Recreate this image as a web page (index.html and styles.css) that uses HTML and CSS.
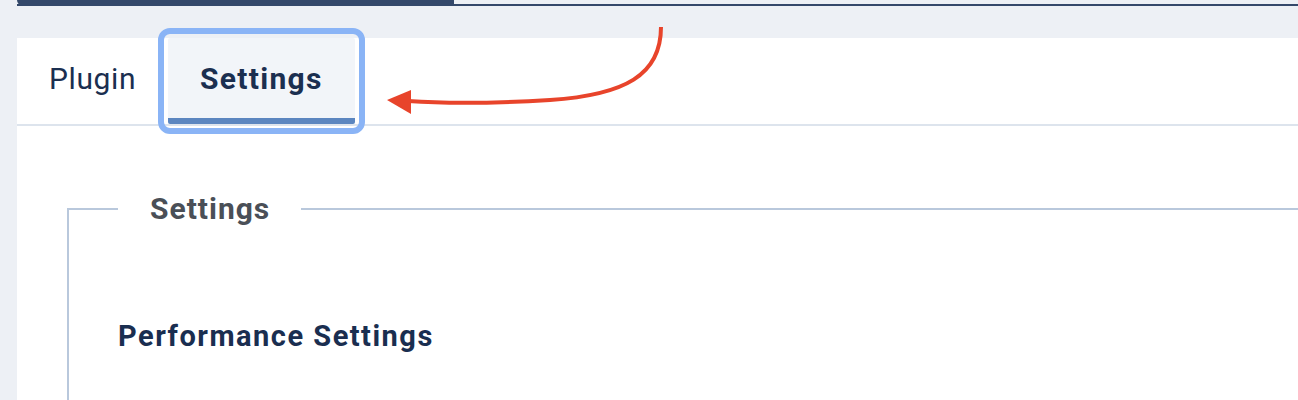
FILE: index.html
```html
<!DOCTYPE html>
<html lang="en">
<head>
  <meta charset="UTF-8" />
  <meta name="viewport" content="width=device-width, initial-scale=1.0" />
  <title>Plugin – Settings</title>
  <link rel="stylesheet" href="styles.css">
</head>
<body>
  <div class="progress">
    <div class="progress-fill"></div>
  </div>

  <div class="panel">
    <div class="tabs">
      <button class="tab">Plugin</button>
      <button class="tab active">Settings</button>
    </div>

    <div class="panel-body">
      <fieldset class="group">
        <legend>Settings</legend>
        <h3 class="group-title">Performance Settings</h3>
      </fieldset>
    </div>
  </div>

  <!-- Annotation arrow pointing at the Settings tab -->
  <svg class="callout" width="1298" height="400" viewBox="0 0 1298 400">
    <path d="M661 27 C 661 75 625 95 550 100 C 500 103 450 104 408 101" fill="none" stroke="#e8442b" stroke-width="4" stroke-linecap="butt" />
    <polygon points="387,100 411,90 411,114" fill="#e8442b" />
  </svg>
</body>
</html>
```

FILE: styles.css
```css
* {
  margin: 0;
  padding: 0;
  box-sizing: border-box;
}

body {
  font-family: Roboto, 'Liberation Sans', sans-serif;
  background: #edf0f5;
  color: #1b2f50;
  height: 100vh;
  overflow: hidden;
  position: relative;
}

/* Top progress bar */
.progress {
  margin-left: 17px;
  height: 6px;
  display: flex;
  align-items: flex-end;
  border-bottom: 2px solid #34486a;
}

.progress-fill {
  width: 437px;
  height: 6px;
  margin-bottom: -2px;
  background: #34486a;
  border-radius: 0 0 0 6px;
}

/* Main panel */
.panel {
  margin: 32px 0 0 17px;
  height: 362px;
  background: #fff;
}

.tabs {
  display: flex;
  border-bottom: 2px solid #dde4ed;
}

.tab {
  font-family: inherit;
  font-size: 30px;
  font-weight: 400;
  letter-spacing: 0.6px;
  color: #1b2f50;
  background: transparent;
  border: none;
  border-bottom: 6px solid transparent;
  height: 86px;
  padding: 2px 32px 0;
  line-height: 78px;
  cursor: pointer;
}

.tab.active {
  font-weight: 700;
  letter-spacing: 1.3px;
  background: #f2f5f9;
  border-bottom-color: #5b86c0;
  border-radius: 2px;
  outline: 6px solid #8ab4f6;
  outline-offset: 4px;
}

.panel-body {
  padding: 65px 0 0 50px;
}

.group {
  border: 2px solid #b9c8dc;
  border-right: none;
  border-bottom: none;
  padding: 0 0 0 49px;
  height: 209px;
}

.group legend {
  font-size: 30px;
  font-weight: 700;
  letter-spacing: 1px;
  color: #4a4f57;
  padding: 0 31px 0 32px;
  line-height: 36px;
}

.group-title {
  font-size: 29px;
  font-weight: 700;
  letter-spacing: 1.5px;
  color: #1a2e50;
  line-height: 36px;
  margin-top: 91px;
}

/* Annotation overlay */
.callout {
  position: absolute;
  top: 0;
  left: 0;
  pointer-events: none;
}
```
